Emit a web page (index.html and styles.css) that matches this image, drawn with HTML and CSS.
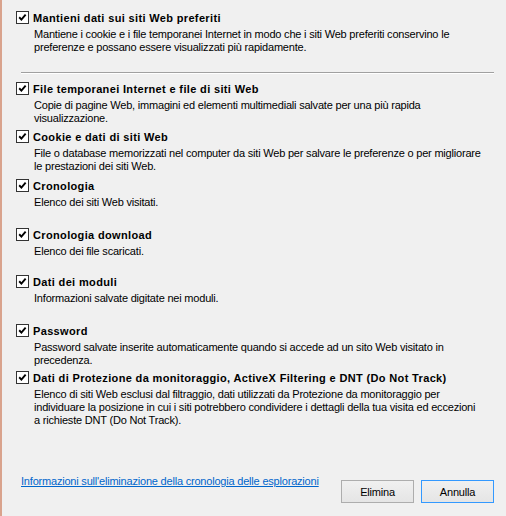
FILE: index.html
```html
<!DOCTYPE html>
<html lang="it">
<head>
<meta charset="utf-8">
<title>Elimina cronologia esplorazioni</title>
<link rel="stylesheet" href="styles.css">
</head>
<body>
<div class="dialog">
  <div class="item first">
    <div class="row"><span class="cb"><svg viewBox="0 0 13 13" width="13" height="13"><path d="M2.6 6.2 L5.2 9 L10.2 3" fill="none" stroke="#000" stroke-width="2.2"/></svg></span><span class="label">Mantieni dati sui siti Web preferiti</span></div>
    <div class="desc">Mantiene i cookie e i file temporanei Internet in modo che i siti Web preferiti conservino le preferenze e possano essere visualizzati più rapidamente.</div>
  </div>
  <div class="sep"></div>
  <div class="item h48">
    <div class="row"><span class="cb"><svg viewBox="0 0 13 13" width="13" height="13"><path d="M2.6 6.2 L5.2 9 L10.2 3" fill="none" stroke="#000" stroke-width="2.2"/></svg></span><span class="label">File temporanei Internet e file di siti Web</span></div>
    <div class="desc">Copie di pagine Web, immagini ed elementi multimediali salvate per una più rapida visualizzazione.</div>
  </div>
  <div class="item h49">
    <div class="row"><span class="cb"><svg viewBox="0 0 13 13" width="13" height="13"><path d="M2.6 6.2 L5.2 9 L10.2 3" fill="none" stroke="#000" stroke-width="2.2"/></svg></span><span class="label">Cookie e dati di siti Web</span></div>
    <div class="desc">File o database memorizzati nel computer da siti Web per salvare le preferenze o per migliorare le prestazioni dei siti Web.</div>
  </div>
  <div class="item h49">
    <div class="row"><span class="cb"><svg viewBox="0 0 13 13" width="13" height="13"><path d="M2.6 6.2 L5.2 9 L10.2 3" fill="none" stroke="#000" stroke-width="2.2"/></svg></span><span class="label">Cronologia</span></div>
    <div class="desc">Elenco dei siti Web visitati.</div>
  </div>
  <div class="item h47">
    <div class="row"><span class="cb"><svg viewBox="0 0 13 13" width="13" height="13"><path d="M2.6 6.2 L5.2 9 L10.2 3" fill="none" stroke="#000" stroke-width="2.2"/></svg></span><span class="label">Cronologia download</span></div>
    <div class="desc">Elenco dei file scaricati.</div>
  </div>
  <div class="item h49">
    <div class="row"><span class="cb"><svg viewBox="0 0 13 13" width="13" height="13"><path d="M2.6 6.2 L5.2 9 L10.2 3" fill="none" stroke="#000" stroke-width="2.2"/></svg></span><span class="label">Dati dei moduli</span></div>
    <div class="desc">Informazioni salvate digitate nei moduli.</div>
  </div>
  <div class="item h47">
    <div class="row"><span class="cb"><svg viewBox="0 0 13 13" width="13" height="13"><path d="M2.6 6.2 L5.2 9 L10.2 3" fill="none" stroke="#000" stroke-width="2.2"/></svg></span><span class="label">Password</span></div>
    <div class="desc">Password salvate inserite automaticamente quando si accede ad un sito Web visitato in precedenza.</div>
  </div>
  <div class="item">
    <div class="row"><span class="cb"><svg viewBox="0 0 13 13" width="13" height="13"><path d="M2.6 6.2 L5.2 9 L10.2 3" fill="none" stroke="#000" stroke-width="2.2"/></svg></span><span class="label">Dati di Protezione da monitoraggio, ActiveX Filtering e DNT (Do Not Track)</span></div>
    <div class="desc">Elenco di siti Web esclusi dal filtraggio, dati utilizzati da Protezione da monitoraggio per individuare la posizione in cui i siti potrebbero condividere i dettagli della tua visita ed eccezioni a&nbsp;richieste DNT (Do Not Track).</div>
  </div>
  <div class="footer">
    <a class="link" href="#">Informazioni sull'eliminazione della cronologia delle esplorazioni</a>
    <div class="buttons">
      <button class="btn">Elimina</button>
      <button class="btn default">Annulla</button>
    </div>
  </div>
</div>
</body>
</html>
```
FILE: styles.css
```css
html, body {
  margin: 0;
  padding: 0;
}
body {
  width: 506px;
  height: 516px;
  background: #f0f0f0;
  font-family: "Liberation Sans", Arial, sans-serif;
  font-size: 11px;
  letter-spacing: -0.2px;
  color: #000;
  overflow: hidden;
}
.dialog {
  box-sizing: border-box;
  height: 516px;
  border-left: 2px solid #d9a38d;
  padding: 12px 12px 13px 14px;
  display: flex;
  flex-direction: column;
}
.item {
  flex: none;
}
.h47 { height: 47px; }
.h48 { height: 48px; }
.h49 { height: 49px; }
.row {
  display: flex;
  align-items: center;
  height: 13px;
  line-height: 13px;
}
.cb {
  box-sizing: border-box;
  width: 13px;
  height: 13px;
  border: 1px solid #333;
  background: #fff;
  display: flex;
  align-items: center;
  justify-content: center;
  margin-right: 4px;
  margin-top: -2px;
}
.cb svg {
  display: block;
  width: 11px;
  height: 11px;
}
.label {
  font-weight: bold;
  letter-spacing: 0.35px;
}
.desc {
  margin-top: 3px;
  padding-left: 18px;
  line-height: 13px;
  padding-right: 4px;
}
.sep {
  flex: none;
  height: 1px;
  background: #a0a0a0;
  border-bottom: 1px solid #fff;
  margin: 18px 0 9px 5px;
}
.footer {
  margin-top: auto;
  display: flex;
  justify-content: space-between;
  align-items: flex-start;
  padding-left: 5px;
}
.link {
  color: #0066cc;
  text-decoration: underline;
  line-height: 13px;
  margin-top: -5px;
}
.buttons {
  display: flex;
  gap: 7px;
}
.btn {
  box-sizing: border-box;
  width: 73px;
  height: 23px;
  border: 1px solid #adadad;
  background: linear-gradient(#f0f0f0, #e5e5e5);
  font-family: "Liberation Sans", Arial, sans-serif;
  font-size: 11px;
  letter-spacing: -0.2px;
  color: #000;
  padding: 0;
  margin: 0;
}
.btn.default {
  border-color: #3399ff;
}
```
